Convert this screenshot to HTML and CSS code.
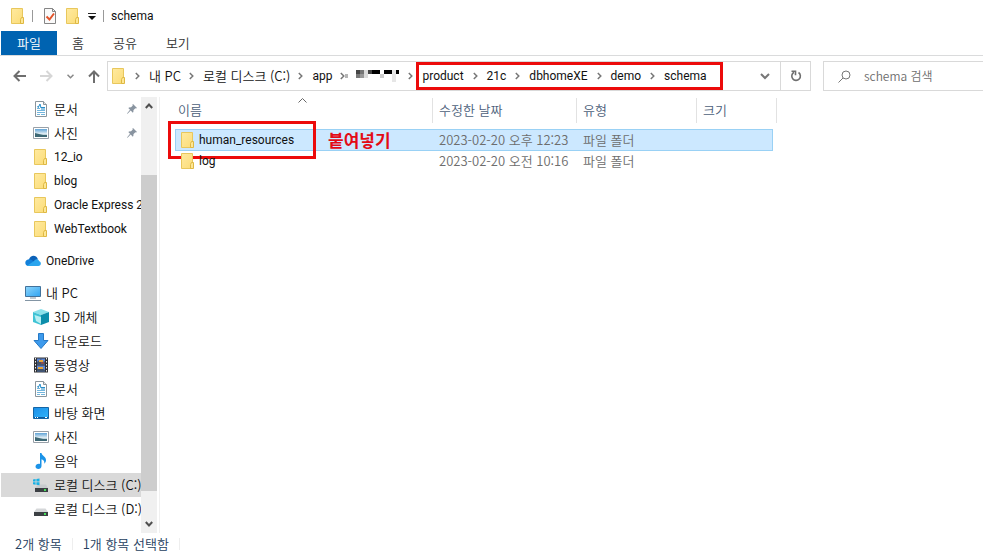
FILE: index.html
```html
<!DOCTYPE html>
<html lang="ko">
<head>
  <meta charset="UTF-8">
  <meta name="viewport" content="width=device-width, initial-scale=1.0">
  <title>schema</title>
  <link rel="stylesheet" href="styles.css">
</head>
<body>
  <!-- Shared icons -->
  <svg class="sprite" aria-hidden="true">
    <defs>
      <linearGradient id="g-folder" x1="0" y1="0" x2="1" y2="1">
        <stop offset="0" stop-color="#ffeaa0"/>
        <stop offset="1" stop-color="#fbdc78"/>
      </linearGradient>
      <linearGradient id="g-sky" x1="0" y1="0" x2="0" y2="1">
        <stop offset="0" stop-color="#5fa3d6"/>
        <stop offset="0.6" stop-color="#e3eff5"/>
        <stop offset="1" stop-color="#4e7f8a"/>
      </linearGradient>
      <linearGradient id="g-screen" x1="0" y1="0" x2="1" y2="1">
        <stop offset="0" stop-color="#8fd6fb"/>
        <stop offset="1" stop-color="#2ea3f2"/>
      </linearGradient>
      <linearGradient id="g-desk" x1="0" y1="0" x2="1" y2="1">
        <stop offset="0" stop-color="#1c8fe8"/>
        <stop offset="1" stop-color="#2fb4fb"/>
      </linearGradient>
    </defs>
    <symbol id="i-folder" viewBox="0 0 16 16">
      <path d="M1.5.5h11v15h-11z" fill="url(#g-folder)" stroke="#e8c75c"/>
      <path d="M11.5 9.5h2v6h-3v-4z" fill="#fde795" stroke="#dfb843"/>
    </symbol>
    <symbol id="i-doc" viewBox="0 0 16 16">
      <path d="M2.5.5h8l3 3v12h-11z" fill="#fff" stroke="#8a959c"/>
      <path d="M10.500 .5v3h3" fill="#dfe5e8" stroke="#8a959c"/>
      <path d="M4 5.500h2M4 7.500h3M4 9.500h8M4 11.500h8M4 13.500h3M8 13.500h4" stroke="#74b6dc"/>
      <path d="M5 7l2-4 1 4M8 6.500h4M8 8h4" fill="none" stroke="#268dca"/>
    </symbol>
    <symbol id="i-photo" viewBox="0 0 16 16">
      <path d="M.5 2.500h15v11H.5z" fill="#fff" stroke="#98a0a8"/>
      <path d="M2 4h12v8H2z" fill="url(#g-sky)"/>
      <path d="M2 8l4 1 4 1h4v2H2z" fill="#3d6875"/>
    </symbol>
    <symbol id="i-pin" viewBox="0 0 10 10">
      <path d="M6 0l4 4-1 .6-.7-.3-1.900 1.900c.3 1 0 1.800-.6 2.500L3.700 6.600.6 9.800 0 9.400l3-3.600L1.300 4c.8-.7 1.700-.9 2.500-.6l2-1.900L5.400.7z" fill="#8994a0"/>
    </symbol>
    <symbol id="i-cloud" viewBox="0 0 16 16">
      <path d="M4 6.500C5 2 11 1 12.800 6L10 11H4z" fill="#0c61b8"/>
      <path d="M3.500 13C-.8 13-.8 6.500 3.800 6.200c1.800-.1 3 .8 4.500 1.800L12 11l-1 2z" fill="#1380da"/>
      <path d="M2 12.800l6.800-4.600C11 5 13.700 6 14 8c2.700.8 2.500 5-.8 5H3.500z" fill="#2aa5ee"/>
    </symbol>
    <symbol id="i-pc" viewBox="0 0 16 16">
      <path d="M.5 1.500h15v10H.5z" fill="url(#g-screen)" stroke="#42729b"/>
      <path d="M5 13h6M0 15.500h16" stroke="#8395a4"/>
    </symbol>
    <symbol id="i-cube" viewBox="0 0 16 16">
      <path d="M8 0l8 3-8 3-8-3z" fill="#8ce1ea"/>
      <path d="M0 3l8 3v10l-8-3z" fill="#3fc3d5"/>
      <path d="M16 3L8 6v10l8-3z" fill="#0d8eab"/>
      <path d="M1.500 6L8 8v7l-5-3z" fill="#b8eff3"/>
    </symbol>
    <symbol id="i-down" viewBox="0 0 16 16">
      <path d="M5.500.5h5v7h4.500L8 15.500 1 7.500h4.500z" fill="#3d9aec" stroke="#2579c6"/>
    </symbol>
    <symbol id="i-video" viewBox="0 0 16 16">
      <path d="M1 .5h14v15H1z" fill="#303033"/>
      <path d="M4 1.500h8v6H4zM4 8.500h8v6H4z" fill="#5b85d3"/>
      <path d="M4 5l4-3 2 3 2-1v3.500H4zM4 12l4-1 4 2v1.500H4z" fill="#40536c"/>
      <path d="M6 4h4M5 11h5" stroke="#e7a438" stroke-width="2"/>
      <path d="M8 6h3" stroke="#d64a31"/>
      <path d="M2.500 1v14M13.500 1v14" stroke="#eee" stroke-dasharray="1.500 1.500"/>
    </symbol>
    <symbol id="i-desktop" viewBox="0 0 16 16">
      <path d="M.5 2.500h15v11H.5z" fill="url(#g-desk)" stroke="#1365a6"/>
      <path d="M1 12.500h14" stroke="#0d5b9d"/>
      <path d="M2 12.500h1M4 12.500h1M12 12.500h2" stroke="#fff"/>
    </symbol>
    <symbol id="i-music" viewBox="0 0 16 16">
      <path d="M7 0h1.500c.3 3 4.500 3.500 4.500 7 0 1.800-.8 3-1.800 3.800C11.700 8.500 11 7 8.500 6.200V13c0 1.700-1.500 3-3.200 3S2.500 15 2.500 13.600c0-1.900 2.300-3.300 4.500-2.600z" fill="#1b93e8"/>
    </symbol>
    <symbol id="i-disk" viewBox="0 0 16 16">
      <path d="M3.500 7.500h9L15 11H1z" fill="#d5d7d9"/>
      <path d="M1 11h14v4H1z" fill="#3c4044"/>
      <path d="M11 13h2" stroke="#48e05c" stroke-width="2"/>
    </symbol>
    <symbol id="i-windisk" viewBox="0 0 16 16">
      <path d="M5 7.500h8l2 3.500H2z" fill="#c8cbce"/>
      <path d="M2 11h13v4H2z" fill="#3c4044"/>
      <path d="M11 13h2" stroke="#48e05c" stroke-width="2"/>
      <path d="M0 2.500l2.600-.4v2.400H0zM3.400 2L6.500 1.500v3H3.400zM0 5.300h2.600v2.400L0 7.300zM3.400 5.300h3.100v3L3.400 7.800z" fill="#18b1e5"/>
    </symbol>
    <symbol id="i-chev" viewBox="0 0 5 8">
      <path d="M.8 1l3 3-3 3" fill="none" stroke="#777" stroke-width="1.500"/>
    </symbol>
  </svg>

  <!-- Title bar -->
  <header class="titlebar">
    <svg class="icon"><use href="#i-folder"/></svg>
    <span class="bar"></span>
    <button class="quick" aria-label="속성">
      <svg class="icon" viewBox="0 0 16 16">
        <path d="M2.500.5h8l3 3v12h-11z" fill="#fafafa" stroke="#858585"/>
        <path d="M10.500.5v3h3" fill="none" stroke="#858585"/>
        <path d="M4.500 8.500l3 3 4.500-6" fill="none" stroke="#e2542b" stroke-width="2"/>
      </svg>
    </button>
    <button class="quick" aria-label="새 폴더"><svg class="icon"><use href="#i-folder"/></svg></button>
    <button class="quick" aria-label="사용자 지정">
      <svg width="8" height="8" viewBox="0 0 8 8"><path d="M0 1.500h8" stroke="#222"/><path d="M0 4h8L4 8z" fill="#111"/></svg>
    </button>
    <span class="bar"></span>
    <h1 class="title">schema</h1>
  </header>

  <!-- Ribbon tabs -->
  <nav class="tabs">
    <button class="tab file">파일</button>
    <button class="tab">홈</button>
    <button class="tab">공유</button>
    <button class="tab">보기</button>
  </nav>

  <!-- Navigation and address bar -->
  <div class="toolbar">
    <div class="arrows">
      <button aria-label="뒤로"><svg width="13" height="12" viewBox="0 0 13 12"><path d="M13 6H1.500M6.500 1l-5 5 5 5" fill="none" stroke="#6e6e6e" stroke-width="2"/></svg></button>
      <button aria-label="앞으로"><svg width="13" height="12" viewBox="0 0 13 12"><path d="M0 6h11.500M6.500 1l5 5-5 5" fill="none" stroke="#d6d6d6" stroke-width="2"/></svg></button>
      <button aria-label="최근 위치"><svg width="7" height="5" viewBox="0 0 7 5"><path d="M.5.800l3 3 3-3" fill="none" stroke="#888" stroke-width="1.500"/></svg></button>
      <button aria-label="위로"><svg width="12" height="13" viewBox="0 0 12 13"><path d="M6 13V1.500M1 6.500l5-5 5 5" fill="none" stroke="#6e6e6e" stroke-width="2"/></svg></button>
    </div>
    <div class="address">
      <svg class="icon"><use href="#i-folder"/></svg>
      <svg class="chev"><use href="#i-chev"/></svg>
      <a href="#">내 PC</a>
      <svg class="chev"><use href="#i-chev"/></svg>
      <a href="#">로컬 디스크 (C:)</a>
      <svg class="chev"><use href="#i-chev"/></svg>
      <a href="#" class="latin">app</a>
      <svg class="chev tight"><use href="#i-chev"/></svg>
      <svg class="mosaic" viewBox="0 0 55 12">
        <path d="M0 4h3v4H0z" fill="#b5b5b5"/>
        <path d="M11 0h4v4h-4z" fill="#444"/><path d="M15 0h4v4h-4z" fill="#777"/>
        <path d="M11 4h4v4h-4z" fill="#777"/><path d="M15 4h4v4h-4z" fill="#999"/>
        <path d="M19 0h4v8h-4z" fill="#ddd"/><path d="M23 0h4v4h-4z" fill="#444"/>
        <path d="M27 0h8v4h-8zM39 0h8v4h-8zM51 0h3v4h-3z" fill="#000"/>
        <path d="M35 4h4v4h-4z" fill="#ccc"/><path d="M47 0h4v12h-4z" fill="#e6e6e6"/>
      </svg>
      <svg class="chev"><use href="#i-chev"/></svg>
      <div class="marked latin">
        <a href="#">product</a>
        <svg class="chev"><use href="#i-chev"/></svg>
        <a href="#">21c</a>
        <svg class="chev"><use href="#i-chev"/></svg>
        <a href="#">dbhomeXE</a>
        <svg class="chev"><use href="#i-chev"/></svg>
        <a href="#">demo</a>
        <svg class="chev"><use href="#i-chev"/></svg>
        <a href="#">schema</a>
      </div>
      <button class="history" aria-label="이전 위치"><svg width="10" height="7" viewBox="0 0 10 7"><path d="M1 1l4 4 4-4" fill="none" stroke="#777" stroke-width="2"/></svg></button>
      <button class="refresh" aria-label="새로 고침">
        <svg width="12" height="12" viewBox="0 0 12 12"><path d="M8.500 2.500a4.300 4.300 0 1 1-4.500-.2" fill="none" stroke="#6f6f6f" stroke-width="1.600"/><path d="M1.500 1.300h4v4" fill="none" stroke="#6f6f6f" stroke-width="1.600"/></svg>
      </button>
    </div>
    <label class="search">
      <svg width="13" height="13" viewBox="0 0 13 13"><circle cx="8" cy="5" r="4" fill="none" stroke="#777"/><path d="M5 8l-4.500 4.500" stroke="#777"/></svg>
      <input type="text" placeholder="schema 검색" aria-label="schema 검색">
    </label>
  </div>

  <main class="main">
    <!-- Folder tree -->
    <nav class="tree">
      <ul>
        <li><a href="#"><svg class="icon"><use href="#i-doc"/></svg>문서<svg class="pin"><use href="#i-pin"/></svg></a></li>
        <li><a href="#"><svg class="icon"><use href="#i-photo"/></svg>사진<svg class="pin"><use href="#i-pin"/></svg></a></li>
        <li><a href="#" class="latin"><svg class="icon"><use href="#i-folder"/></svg>12_io</a></li>
        <li><a href="#" class="latin"><svg class="icon"><use href="#i-folder"/></svg>blog</a></li>
        <li><a href="#" class="latin"><svg class="icon"><use href="#i-folder"/></svg>Oracle Express 2</a></li>
        <li><a href="#" class="latin"><svg class="icon"><use href="#i-folder"/></svg>WebTextbook</a></li>
      </ul>
      <ul>
        <li><a href="#" class="root latin"><svg class="icon"><use href="#i-cloud"/></svg>OneDrive</a></li>
      </ul>
      <ul>
        <li><a href="#" class="root"><svg class="icon"><use href="#i-pc"/></svg>내 PC</a></li>
        <li><a href="#"><svg class="icon"><use href="#i-cube"/></svg>3D 개체</a></li>
        <li><a href="#"><svg class="icon"><use href="#i-down"/></svg>다운로드</a></li>
        <li><a href="#"><svg class="icon"><use href="#i-video"/></svg>동영상</a></li>
        <li><a href="#"><svg class="icon"><use href="#i-doc"/></svg>문서</a></li>
        <li><a href="#"><svg class="icon"><use href="#i-desktop"/></svg>바탕 화면</a></li>
        <li><a href="#"><svg class="icon"><use href="#i-photo"/></svg>사진</a></li>
        <li><a href="#"><svg class="icon"><use href="#i-music"/></svg>음악</a></li>
        <li><a href="#" class="current"><svg class="icon"><use href="#i-windisk"/></svg>로컬 디스크 (C:)</a></li>
        <li><a href="#"><svg class="icon"><use href="#i-disk"/></svg>로컬 디스크 (D:)</a></li>
      </ul>
    </nav>
    <div class="scrollbar">
      <button aria-label="위로 스크롤"><svg width="8" height="6" viewBox="0 0 8 6"><path d="M.8 5L4 1.500 7.200 5" fill="none" stroke="#505050" stroke-width="2"/></svg></button>
      <div class="track"><div class="thumb"></div></div>
      <button aria-label="아래로 스크롤"><svg width="8" height="6" viewBox="0 0 8 6"><path d="M.8 1L4 4.500 7.200 1" fill="none" stroke="#505050" stroke-width="2"/></svg></button>
    </div>

    <!-- File list -->
    <section class="files">
      <table>
        <colgroup><col class="c-name"><col class="c-date"><col class="c-type"><col class="c-size"></colgroup>
        <thead>
          <tr>
            <th>이름<svg class="sort" viewBox="0 0 9 5"><path d="M.5 4.500l4-4 4 4" fill="none" stroke="#666"/></svg></th>
            <th>수정한 날짜</th>
            <th>유형</th>
            <th>크기</th>
          </tr>
        </thead>
        <tbody>
          <tr class="selected">
            <td class="name"><div class="entry"><svg class="icon"><use href="#i-folder"/></svg><a href="#" class="latin">human_resources</a><strong class="note">붙여넣기</strong></div></td>
            <td>2023-02-20 오후 12:23</td>
            <td>파일 폴더</td>
            <td></td>
          </tr>
          <tr>
            <td class="name"><div class="entry"><svg class="icon"><use href="#i-folder"/></svg><a href="#" class="latin">log</a></div></td>
            <td>2023-02-20 오전 10:16</td>
            <td>파일 폴더</td>
            <td></td>
          </tr>
        </tbody>
      </table>
    </section>
  </main>

  <!-- Status bar -->
  <footer class="status">
    <span>2개 항목</span>
    <span>1개 항목 선택함</span>
  </footer>
</body>
</html>
```
FILE: styles.css
```css
*,
*::before,
*::after {
  margin: 0;
  padding: 0;
  box-sizing: border-box;
}
body {
  display: flex;
  flex-direction: column;
  height: 100vh;
  overflow: hidden;
  font-family: 'Noto Sans CJK KR', sans-serif;
  font-size: 13px;
  font-weight: 350;
  line-height: 20px;
  color: #111;
  background: #fff;
}
a {
  color: inherit;
  text-decoration: none;
}
button {
  border: 0;
  background: none;
  font: inherit;
  color: inherit;
}
svg {
  display: block;
  flex: none;
}
.sprite {
  position: absolute;
  width: 0;
  height: 0;
}
.icon {
  width: 16px;
  height: 16px;
}
.latin, .title {
  font-family: Roboto, 'Noto Sans CJK KR', sans-serif;
  font-size: 12px;
  font-weight: 400;
}
/* Title bar */
.titlebar {
  display: flex;
  align-items: center;
  height: 31px;
  padding-left: 10px;
}
.titlebar .bar {
  width: 1px;
  height: 12px;
  margin: 0 9px 0 6px;
  background: #999;
}
.quick {
  margin-right: 7px;
}
.quick + .bar {
  margin: 0 7px 0 0;
}
/* Ribbon tabs */
.tabs {
  display: flex;
  gap: 1px;
  height: 25px;
  padding-left: 1px;
  border-bottom: 1px solid #dadbdc;
}
.tab {
  padding: 0 14px;
  color: #333;
}
.tab.file {
  width: 56px;
  padding: 0;
  color: #fff;
  background: #0063b1;
}
/* Address bar */
.toolbar {
  display: flex;
  align-items: center;
  height: 41px;
  padding-bottom: 1px;
}
.arrows {
  display: flex;
  align-items: center;
  gap: 14px;
  width: 107px;
  padding-left: 13px;
}
.address {
  display: flex;
  flex: 1;
  align-items: center;
  height: 30px;
  padding-left: 3px;
  border: 1px solid #d9d9d9;
}
.chev {
  width: 5px;
  height: 8px;
  margin: 0 9px 0 8px;
}
.chev.tight {
  margin-right: 0;
}
.mosaic {
  width: 55px;
  height: 12px;
}
.marked {
  position: relative;
  display: flex;
  align-items: center;
}
.marked .chev {
  margin: 0 9px;
}
.marked::before {
  content: '';
  position: absolute;
  inset: -4px -16px -4px -6px;
  border: 3px solid #ec0b0b;
  pointer-events: none;
}
.history {
  display: flex;
  margin-left: auto;
  padding: 0 10px;
}
.refresh {
  display: flex;
  align-items: center;
  justify-content: center;
  width: 30px;
  height: 28px;
  border-left: 1px solid #d9d9d9;
}
.search {
  display: flex;
  align-items: center;
  gap: 13px;
  width: 160px;
  height: 30px;
  margin-left: 12px;
  padding-left: 14px;
  border: 1px solid #d9d9d9;
  border-right: 0;
}
.search input {
  flex: 1;
  min-width: 0;
  border: 0;
  outline: 0;
  font: inherit;
  font-size: 12px;
}
.search input::placeholder {
  color: #6d6d6d;
}
/* Folder tree */
.main {
  display: flex;
  flex: 1;
  min-height: 0;
}
.tree {
  width: 141px;
  padding-left: 1px;
  overflow: hidden;
}
.tree ul {
  margin-bottom: 8px;
  list-style: none;
}
.tree a {
  display: flex;
  align-items: center;
  gap: 5px;
  height: 24px;
  padding-left: 32px;
  white-space: nowrap;
}
.tree a.root {
  padding-left: 24px;
}
.tree a.current {
  background: #d9d9d9;
}
.pin {
  width: 10px;
  height: 10px;
  margin: 0 4px 0 auto;
}
.scrollbar {
  display: flex;
  flex-direction: column;
  width: 16px;
  background: #f0f0f0;
}
.scrollbar button {
  display: flex;
  align-items: center;
  justify-content: center;
  height: 18px;
}
.track {
  display: flex;
  flex: 1;
  flex-direction: column;
}
.track::before {
  content: '';
  flex: 15;
}
.thumb {
  flex: 79;
  background: #cdcdcd;
}
.track::after {
  content: '';
  flex: 6;
}
/* File list */
.files {
  flex: 1;
  min-width: 0;
  margin-left: 2px;
  padding: 1px 0 0 15px;
  border-left: 1px solid #f0f0f0;
}
table {
  width: 598px;
  table-layout: fixed;
  border-spacing: 0;
}
.c-name {
  width: 258px;
}
.c-date {
  width: 144px;
}
.c-type {
  width: 120px;
}
th {
  position: relative;
  height: 31px;
  padding: 0 0 8px 6px;
  font-weight: 350;
  text-align: left;
  color: #4c607a;
}
th:first-child {
  padding-left: 3px;
}
th::after {
  content: '';
  position: absolute;
  top: 0;
  right: 0;
  width: 1px;
  height: 25px;
  background: #e2e2e2;
}
th:last-child::after {
  right: -4px;
}
.sort {
  position: absolute;
  top: 0;
  left: 123px;
  width: 9px;
  height: 5px;
}
td {
  height: 20px;
  padding-left: 6px;
  color: #6d6d6d;
}
td.name {
  padding-left: 5px;
  color: #111;
}
.selected td {
  border: solid #99d1f5;
  border-width: 1px 0;
  background: #cce8ff;
}
.selected td:first-child {
  padding-left: 4px;
  border-left-width: 1px;
}
.selected td:last-child {
  border-right-width: 1px;
}
.entry {
  position: relative;
  display: flex;
  align-items: center;
  gap: 3px;
}
.selected .entry::before {
  content: '';
  position: absolute;
  top: -9px;
  left: -12px;
  width: 148px;
  height: 38px;
  border: 3px solid #ec0b0b;
}
.note {
  position: absolute;
  left: 148px;
  font-size: 17px;
  color: #e30b16;
}
/* Status bar */
.status {
  display: flex;
  align-items: center;
  height: 24px;
  padding: 0 0 2px 15px;
  color: #26405e;
}
.status span {
  padding-right: 10px;
  margin-right: 10px;
  border-right: 1px solid #eee;
  line-height: 12px;
}
```
